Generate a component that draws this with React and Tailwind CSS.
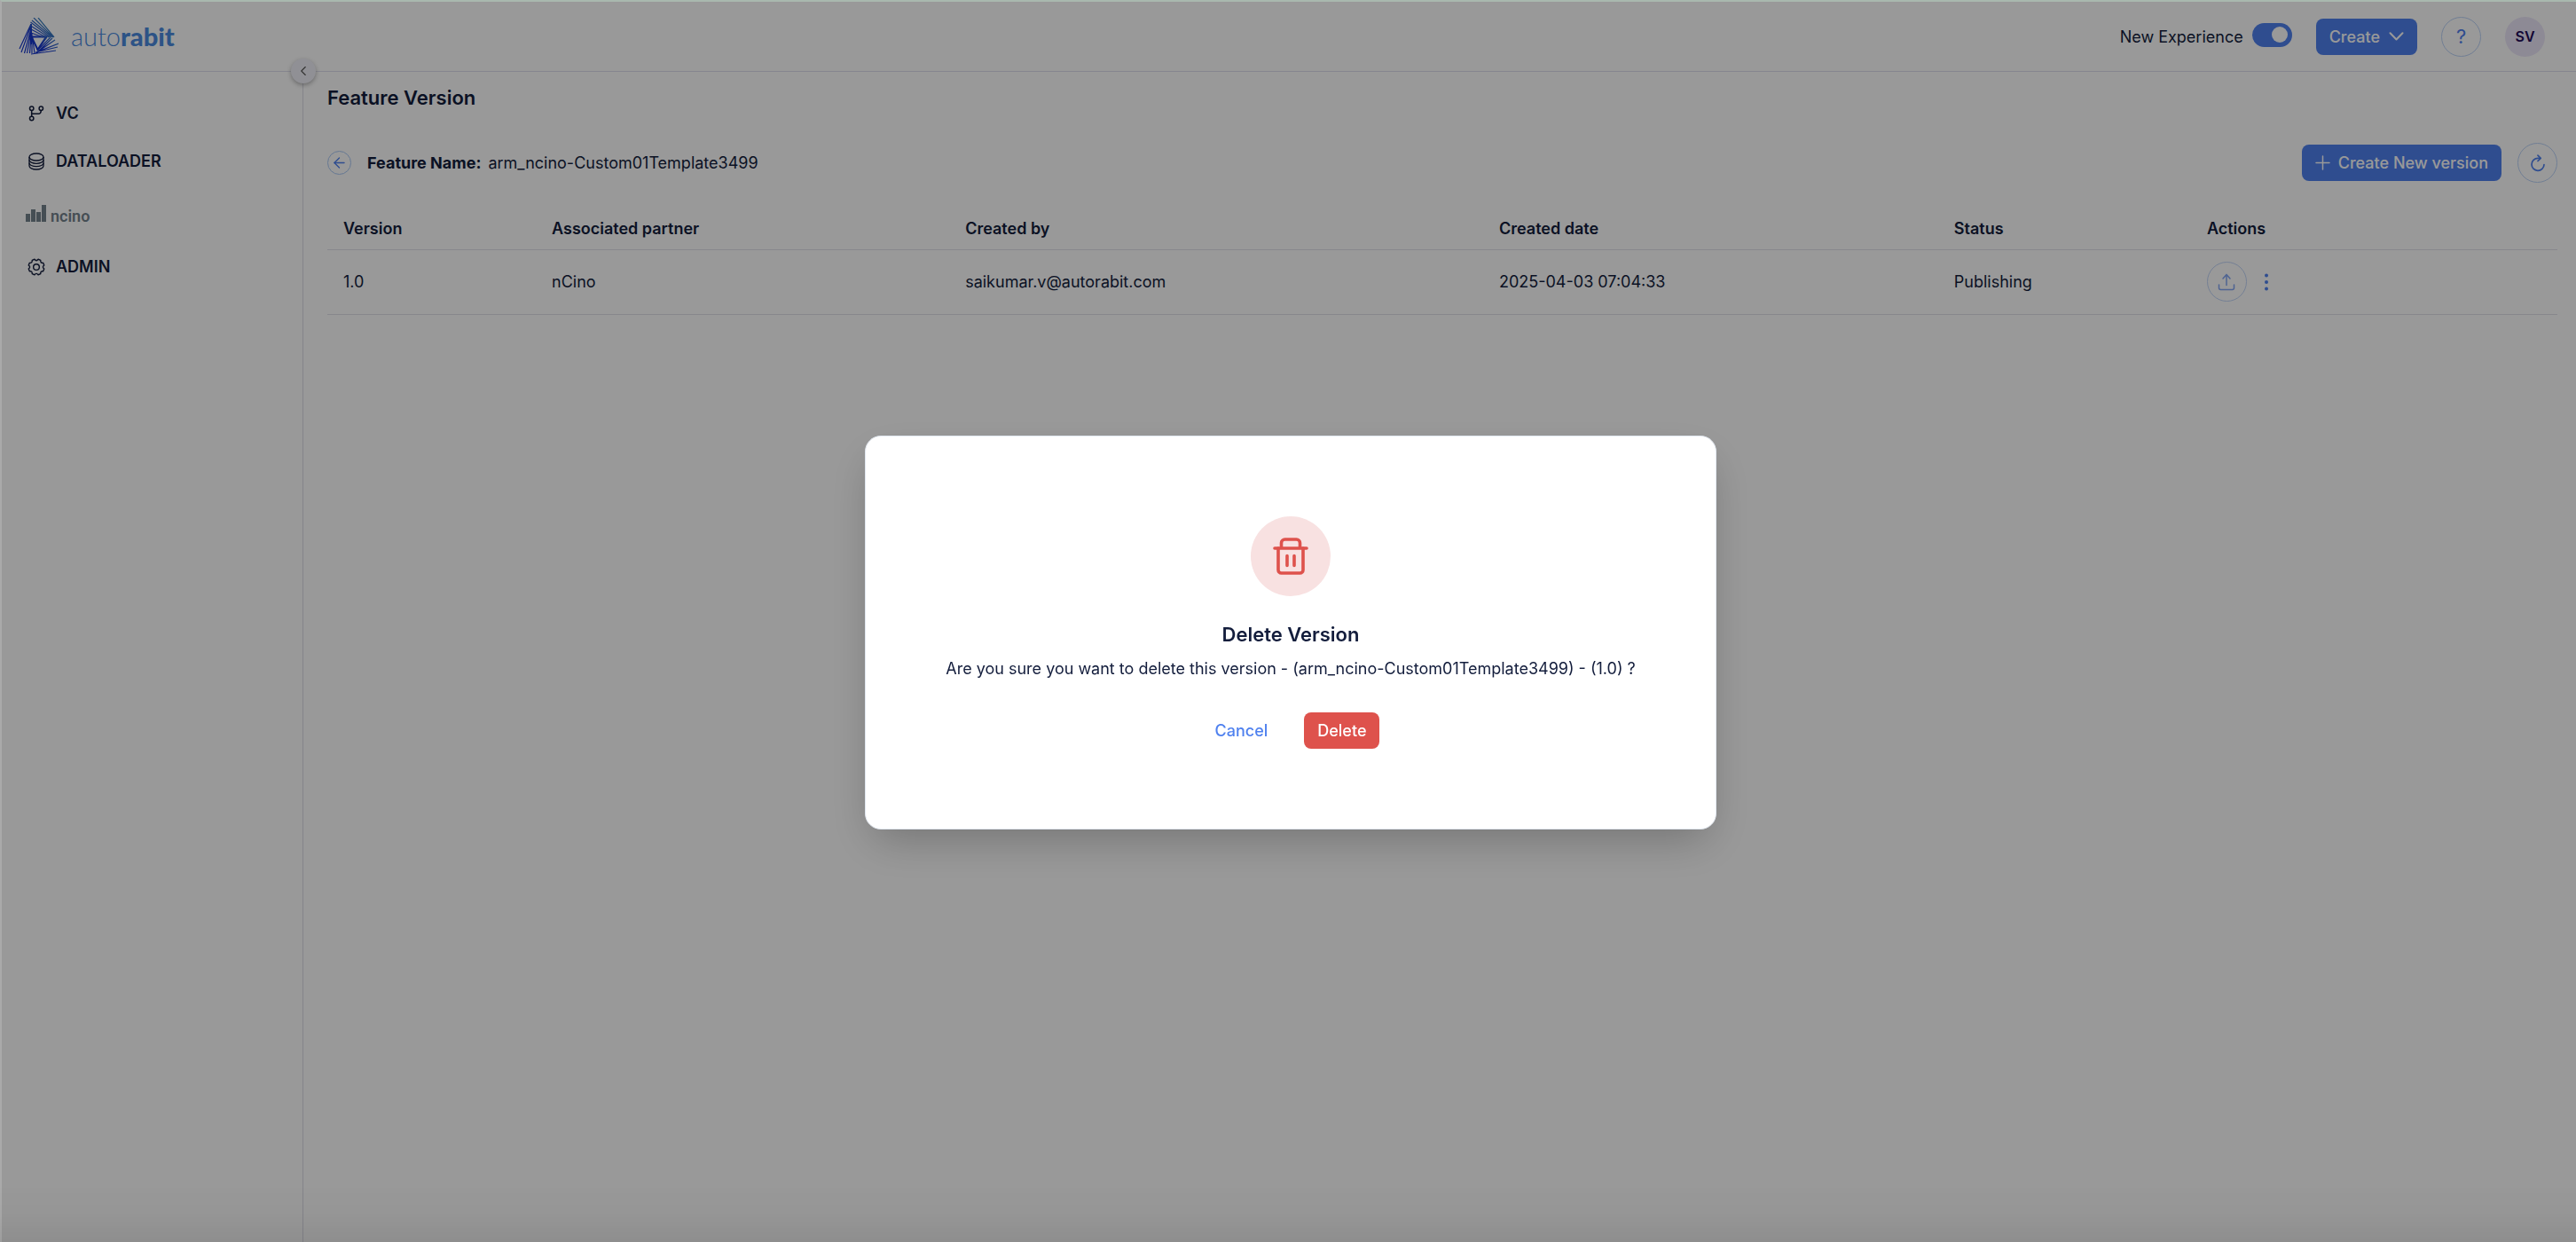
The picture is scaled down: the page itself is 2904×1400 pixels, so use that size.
import { ChevronLeft, ArrowLeft } from "lucide-react";

const columns = ["Version", "Associated partner", "Created by", "Created date", "Status", "Actions"];

const rows = [
  {
    version: "1.0",
    partner: "nCino",
    createdBy: "saikumar.v@autorabit.com",
    createdDate: "2025-04-03 07:04:33",
    status: "Publishing",
  },
];

/* Three fans of strokes that wrap around a hollow triangle. */
const markStrokes = [
  "M14 7L1 35M14 9L3 39M14.500 11L6.500 40M14.500 13L9.500 40M14.500 15L12.500 40M15 17L15 40M15.500 22L18 40",
  "M22 0L40 22M17 0L39 22M15 3L38 22M13.500 5L36 22M13.500 9L34 22M14 13L31 22M14 17L28 22",
  "M45 29L22 38M44 33L19 39M42 37L14 41M41 25L22 38M38 23L20 40M36 22L21 37M32 22L21 36",
];

function LogoMark() {
  return (
    <svg width="45" height="42" viewBox="0 0 45 42" fill="none" aria-hidden="true">
      <defs>
        <linearGradient id="mark" x1="18" y1="26" x2="38" y2="6" gradientUnits="userSpaceOnUse">
          <stop offset="0.1" stopColor="#1636cc" />
          <stop offset="1" stopColor="#4f9fb8" />
        </linearGradient>
      </defs>
      <g stroke="url(#mark)">
        {markStrokes.map((d) => (
          <path key={d} d={d} strokeWidth="1.2" />
        ))}
        <path d="M14.500 21.500H31L21.500 36Z" strokeWidth="2" />
        <path d="M14 7V30" strokeWidth="2" />
      </g>
    </svg>
  );
}

function BranchIcon() {
  return (
    <svg width="18" height="18" viewBox="0 0 18 18" fill="none" stroke="currentColor" strokeWidth="1.5" aria-hidden="true">
      <circle cx="3.700" cy="3.300" r="2.200" />
      <circle cx="14.300" cy="3.300" r="2.200" />
      <circle cx="3.700" cy="14.500" r="2.200" />
      <path d="M3.700 5.500v6.800M3.700 9.200h8.300c1.500 0 2.100-.8 2.300-3.700" />
    </svg>
  );
}

function DatabaseIcon() {
  return (
    <svg width="18" height="20" viewBox="0 0 18 20" fill="none" stroke="currentColor" strokeWidth="1.3" aria-hidden="true">
      <ellipse cx="9" cy="5" rx="8" ry="4" />
      <path d="M1 5v10c0 2.200 3.600 4 8 4s8-1.800 8-4V5" />
      <path d="M1 8.300c0 2.200 3.600 4 8 4s8-1.800 8-4M1 11.700c0 2.200 3.600 4 8 4s8-1.800 8-4" />
    </svg>
  );
}

function GearIcon() {
  return (
    <svg width="20" height="20" viewBox="0 0 24 24" fill="none" stroke="currentColor" strokeWidth="1.7" strokeLinejoin="round" aria-hidden="true">
      <circle cx="12" cy="12" r="4" />
      <path d="M9.500 1.500c1 1.200 1.700 1.700 2.500 1.700s1.500-.5 2.500-1.700l3.200 1.400c-.1 1.500.1 2.400.7 2.900s1.400.7 2.800.6l1.300 3.200c-1.100 1-1.600 1.700-1.600 2.400s.5 1.500 1.600 2.500l-1.300 3.200c-1.400-.1-2.300.1-2.800.6s-.8 1.400-.7 2.900l-3.200 1.300c-1-1.200-1.700-1.700-2.500-1.700s-1.500.5-2.500 1.700l-3.200-1.300c.1-1.500-.1-2.400-.7-2.900s-1.400-.7-2.800-.6l-1.300-3.200c1.100-1 1.600-1.700 1.600-2.500s-.5-1.400-1.600-2.400l1.300-3.200c1.400.1 2.300-.1 2.800-.6s.8-1.400.7-2.900z" />
    </svg>
  );
}

function ChevronIcon() {
  return (
    <svg width="17" height="10" viewBox="0 0 17 10" fill="none" stroke="currentColor" strokeWidth="2" strokeLinecap="round" strokeLinejoin="round" aria-hidden="true">
      <path d="M1.500 1.200 8.500 8.500 15.500 1.200" />
    </svg>
  );
}

function PlusIcon() {
  return (
    <svg width="17" height="17" viewBox="0 0 17 17" fill="none" stroke="currentColor" strokeWidth="1.500" strokeLinecap="round" aria-hidden="true">
      <path d="M8.500 1v15M1 8.500h15" />
    </svg>
  );
}

function RefreshIcon() {
  return (
    <svg width="16" height="20" viewBox="0 0 16 20" fill="none" stroke="currentColor" strokeWidth="1.7" strokeLinecap="round" strokeLinejoin="round" aria-hidden="true">
      <path d="M10.500 4.300H8A7 7 0 1 0 15 11.500" />
      <path d="M8 1.200 11.200 4.300 8 7.500" />
    </svg>
  );
}

function UploadIcon() {
  return (
    <svg width="20" height="20" viewBox="0 0 20 20" fill="none" stroke="currentColor" strokeWidth="1.500" strokeLinecap="round" strokeLinejoin="round" aria-hidden="true">
      <path d="M10 13.500V1.500M6 6l4-4.500L14 6" />
      <path d="M1.500 13v3.500a2 2 0 0 0 2 2h13a2 2 0 0 0 2-2V13" />
    </svg>
  );
}

function TrashIcon() {
  return (
    <svg width="42" height="42" viewBox="0 0 42 42" fill="none" stroke="currentColor" strokeWidth="3.6" strokeLinecap="round" strokeLinejoin="round" aria-hidden="true">
      <path d="M3 12h36M10.500 12V6a4 4 0 0 1 4-4h13a4 4 0 0 1 4 4V12" />
      <path d="M7 12v24.500a3.500 3.500 0 0 0 3.500 3.500h21a3.500 3.500 0 0 0 3.500-3.500V12" />
      <path d="M17 20.500v11M25 20.500v11" />
    </svg>
  );
}

function NcinoLogo() {
  return (
    <span className="flex items-end gap-1 text-[#74828c]">
      <svg width="24" height="19" viewBox="0 0 24 19" fill="currentColor" aria-hidden="true">
        <rect x="0" y="10" width="5" height="9" />
        <rect x="6" y="5" width="5" height="14" />
        <rect x="12" y="8" width="5" height="11" />
        <rect x="18" y="0" width="5" height="19" />
      </svg>
      <span className="font-[Roboto] text-[18px] leading-[12px] font-semibold">ncino</span>
    </span>
  );
}

function NavLink({ icon, label }) {
  return (
    <a href="#" className="flex items-center gap-3 text-[18px] leading-7 font-semibold">
      <span className="flex w-5 justify-center">{icon}</span>
      {label}
    </a>
  );
}

function Header() {
  return (
    <header className="flex h-[79px] items-center justify-between border-b border-[#e0e0ee] pr-[35px] pl-[19px]">
      <a href="#" className="flex items-center gap-[14px]">
        <LogoMark />
        <span className="font-[Lato] text-[29px] leading-8 font-light text-[#4b8be0]">
          auto<b className="font-black">rabit</b>
        </span>
      </a>
      <div className="flex items-center">
        <label htmlFor="experience" className="mr-[10px] text-[18px]">New Experience</label>
        <span className="relative mr-[27px] mb-1 flex">
          <input
            id="experience"
            type="checkbox"
            defaultChecked
            className="h-[27px] w-[45px] appearance-none rounded-full bg-[#4f81ef]"
          />
          <span className="pointer-events-none absolute top-[4px] right-[5px] size-[18px] rounded-full bg-white" />
        </span>
        <button className="mr-[27px] flex h-[41px] items-center gap-[10px] rounded-lg bg-[#4f81ef] px-[15px] text-[18px] font-medium text-white">
          Create
          <ChevronIcon />
        </button>
        <button className="mr-[27px] flex size-[45px] items-center justify-center rounded-full border border-[#bcd3f7] text-[22px] text-[#4f81ef]">
          ?
        </button>
        <button className="flex size-[45px] items-center justify-center rounded-full bg-[#ece6f8] text-[16px] font-semibold text-[#1f0a57]">
          SV
        </button>
      </div>
    </header>
  );
}

function Sidebar() {
  return (
    <aside className="relative w-[340px] shrink-0 border-r border-[#dcdce6]">
      <nav className="flex flex-col items-start gap-[26px] pt-[33px] pl-[29px]">
        <NavLink icon={<BranchIcon />} label="VC" />
        <NavLink icon={<DatabaseIcon />} label="DATALOADER" />
        <a href="#" className="-ml-0.5 flex h-[39px] items-start pt-[9px]"><NcinoLogo /></a>
        <NavLink icon={<GearIcon />} label="ADMIN" />
      </nav>
      <button
        aria-label="Collapse menu"
        className="absolute -top-[15px] -right-[15px] flex size-[28px] items-center justify-center rounded-full bg-[#f1f1f8] text-[#555] shadow-[0_2px_5px_rgba(0,0,0,0.3)]"
      >
        <ChevronLeft size={18} strokeWidth={1.500} />
      </button>
    </aside>
  );
}

function VersionTable() {
  return (
    <table className="mt-[28px] w-full table-fixed text-left text-[18px]">
      <colgroup>
        <col className="w-[9.35%]" />
        <col className="w-[18.54%]" />
        <col className="w-[23.94%]" />
        <col className="w-[20.4%]" />
        <col className="w-[11.34%]" />
        <col />
      </colgroup>
      <thead>
        <tr className="h-[47px] border-b border-[#e2e2ea]">
          {columns.map((name) => (
            <th key={name} className="px-[18px] font-semibold">{name}</th>
          ))}
        </tr>
      </thead>
      <tbody>
        {rows.map((row) => (
          <tr key={row.version} className="h-[73px] border-b border-[#e2e2ea]">
            <td className="px-[18px]">{row.version}</td>
            <td className="px-[18px]">{row.partner}</td>
            <td className="px-[18px]">{row.createdBy}</td>
            <td className="px-[18px]">{row.createdDate}</td>
            <td className="px-[18px]">{row.status}</td>
            <td className="px-[18px]">
              <div className="flex items-center gap-4">
                <button disabled aria-label="Upload" className="flex size-[45px] items-center justify-center rounded-full border border-[#a9c4f5] text-[#4f81ef] opacity-70">
                  <UploadIcon />
                </button>
                <button aria-label="More actions" className="flex w-3 justify-center text-[#4f81ef]">
                  <svg width="4" height="20" viewBox="0 0 4 20" fill="currentColor" aria-hidden="true">
                    <circle cx="2" cy="2.500" r="2" />
                    <circle cx="2" cy="10" r="2" />
                    <circle cx="2" cy="17.500" r="2" />
                  </svg>
                </button>
              </div>
            </td>
          </tr>
        ))}
      </tbody>
    </table>
  );
}

function DeleteDialog() {
  return (
    <div className="fixed inset-0 flex items-center justify-center border-t-2 border-l-2 border-t-[#a9b8ae] border-l-[#aaaaaa] bg-black/40 pt-[23px] pl-[4px]">
      <div
        role="dialog"
        aria-modal="true"
        aria-labelledby="dialog-title"
        className="flex w-full max-w-[960px] flex-col items-center rounded-[18px] border border-[#e2e8f0] bg-white py-[90px] text-center shadow-[0_20px_50px_-10px_rgba(0,0,0,0.25)]"
      >
        <div className="flex size-[90px] items-center justify-center rounded-full bg-[#f8e1e1] text-[#de524c]">
          <TrashIcon />
        </div>
        <h2 id="dialog-title" className="mt-[27px] text-[22px] leading-8 font-semibold [font-optical-sizing:none]">Delete Version</h2>
        <p className="mt-[9px] text-[18px] leading-7">
          Are you sure you want to delete this version - (arm_ncino-Custom01Template3499) - (1.0) ?
        </p>
        <div className="mt-[35px] flex gap-[26px]">
          <button className="h-[41px] rounded-lg px-[15px] text-[18px] font-medium text-[#4f81ef]">Cancel</button>
          <button className="h-[41px] rounded-lg bg-[#de524c] px-[15px] text-[18px] font-medium text-white">Delete</button>
        </div>
      </div>
    </div>
  );
}

export default function App() {
  return (
    <div className="flex min-h-screen flex-col bg-white pt-0.5 pl-0.5 font-[Inter,sans-serif] text-[#131d3c]">
      <Header />
      <div className="flex flex-1">
        <Sidebar />
        <main className="min-w-0 flex-1 pt-[13px] pr-[21px] pl-[27px]">
          <h1 className="text-[22px] leading-8 font-semibold [font-optical-sizing:none]">Feature Version</h1>
          <div className="mt-[35px] flex items-center justify-between">
            <div className="flex items-center text-[18px]">
              <button aria-label="Back" className="mr-[18px] flex size-[27px] items-center justify-center rounded-full border border-[#a9c8f5] text-[#4f81ef]">
                <ArrowLeft size={19} strokeWidth={1.700} />
              </button>
              <span className="mr-2 font-bold">Feature Name:</span>
              <span>arm_ncino-Custom01Template3499</span>
            </div>
            <div className="flex items-center gap-[18px]">
              <button className="flex h-[41px] items-center gap-[9px] rounded-lg bg-[#4f81ef] px-[15px] text-[18px] font-medium text-white">
                <PlusIcon />
                Create New version
              </button>
              <button aria-label="Refresh" className="flex size-[45px] items-center justify-center rounded-full border border-[#bcd3f7] text-[#4f81ef]">
                <RefreshIcon />
              </button>
            </div>
          </div>
          <VersionTable />
        </main>
      </div>
      <DeleteDialog />
      <div className="pointer-events-none fixed inset-x-0 bottom-0 h-16 bg-linear-to-t from-black/7 via-black/2 to-transparent" />
    </div>
  );
}
